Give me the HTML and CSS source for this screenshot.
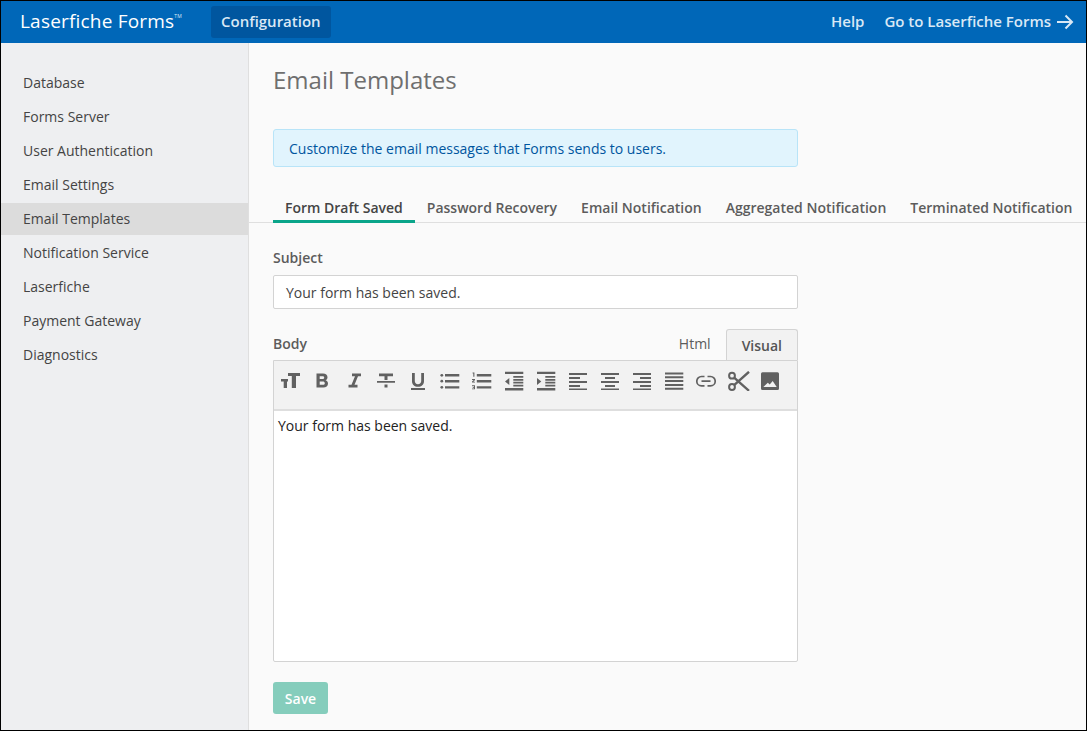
FILE: index.html
```html
<!DOCTYPE html>
<html lang="en">
<head>
<meta charset="utf-8">
<title>Email Templates</title>
<link rel="stylesheet" href="styles.css">
</head>
<body>
<div class="app">
  <header class="topbar">
    <div class="brand">Laserfiche Forms<sup class="tm">TM</sup></div>
    <div class="crumb">Configuration</div>
    <nav class="toplinks">
      <a class="toplink">Help</a>
      <a class="toplink golink">Go to Laserfiche Forms
        <svg class="arrow" width="18" height="16" viewBox="0 0 18 16"><path d="M1 8h15M9.500 1.500 16 8l-6.500 6.500" fill="none" stroke="currentColor" stroke-width="2"/></svg>
      </a>
    </nav>
  </header>
  <div class="main">
    <aside class="sidebar">
      <a class="side-item">Database</a>
      <a class="side-item">Forms Server</a>
      <a class="side-item">User Authentication</a>
      <a class="side-item">Email Settings</a>
      <a class="side-item active">Email Templates</a>
      <a class="side-item">Notification Service</a>
      <a class="side-item">Laserfiche</a>
      <a class="side-item">Payment Gateway</a>
      <a class="side-item">Diagnostics</a>
    </aside>
    <section class="content">
      <h1 class="title">Email Templates</h1>
      <div class="notice">Customize the email messages that Forms sends to users.</div>
      <div class="tabs">
        <a class="tab active">Form Draft Saved</a>
        <a class="tab">Password Recovery</a>
        <a class="tab">Email Notification</a>
        <a class="tab">Aggregated Notification</a>
        <a class="tab">Terminated Notification</a>
      </div>
      <div class="form">
        <label class="label">Subject</label>
        <div class="input">Your form has been saved.</div>
        <div class="body-head">
          <label class="label body-label">Body</label>
          <div class="modes">
            <a class="mode">Html</a>
            <a class="mode on">Visual</a>
          </div>
        </div>
        <div class="editor">
          <div class="toolbar">
            <svg class="ic" viewBox="0 0 20 20"><path d="M8 2h12v3h-4v12h-4.200V5H8zM1 8h7v2.500H7V17H3.700v-6.500H1z"/></svg>
            <svg class="ic" viewBox="0 0 20 20"><path fill-rule="evenodd" d="M4.500 2.500h6.500c2.800 0 4.500 1.500 4.500 3.800 0 1.500-.8 2.500-1.900 3 1.500.5 2.400 1.700 2.400 3.300 0 2.500-1.900 3.900-4.700 3.900H4.500zm3.200 2.700v2.900h2.700c1 0 1.800-.5 1.800-1.500s-.8-1.400-1.800-1.400zm0 5.400v3.200h3.100c1.200 0 2-.5 2-1.600s-.8-1.600-2-1.600z"/></svg>
            <svg class="ic" viewBox="0 0 20 20"><path d="M8 2.500h9v2.800h-3L10.500 13.700h3v2.800h-9v-2.800h3L11 5.300H8z"/></svg>
            <svg class="ic" viewBox="0 0 20 20"><path d="M1 10h18v1.700H1zM3 2.500h14v2.800h-5.500V9h-3V5.300H3zM8.500 13.500h3v3h-3z"/></svg>
            <svg class="ic" viewBox="0 0 20 20"><path d="M3 17h14v2H3zM4 2h2.800v8c0 2 1.300 3.200 3.200 3.200s3.200-1.200 3.200-3.200V2H16v8.200c0 3.400-2.500 5.600-6 5.600s-6-2.200-6-5.600z"/></svg>
            <svg class="ic" viewBox="0 0 20 20"><circle cx="1.800" cy="4.300" r="1.400"/><circle cx="1.800" cy="10.200" r="1.400"/><circle cx="1.800" cy="16.300" r="1.400"/><path d="M5 3h14.300v2.400H5zM5 9h14.300v2.400H5zM5 15.200h14.300v2.400H5z"/></svg>
            <svg class="ic" viewBox="0 0 20 20"><path d="M.6 1.500h1.800v4.300H1.300V2.600H.6zM0 8h3v1.100L1.400 10.700H3v.9H0v-1l1.700-1.700H0zM0 14.300h3v4H0v-.9h2v-.7H.7v-.8H2v-.7H0zM4.800 3h14.500v2.400H4.800zM4.800 9h14.500v2.400H4.800zM4.800 15.200h14.500v2.400H4.800z"/></svg>
            <svg class="ic" viewBox="0 0 20 20"><path d="M1 .8h18.300v2.200H1zM1 17h18.300v2.500H1zM9.300 5h10v1.800h-10zM9.300 7.900h10v1.800h-10zM9.300 10.800h10v1.800h-10zM9.300 13.700h10v1.800h-10zM5.300 7v7L1 10.500z"/></svg>
            <svg class="ic" viewBox="0 0 20 20"><path d="M1 .8h18.300v2.200H1zM1 17h18.300v2.500H1zM9.300 5h10v1.800h-10zM9.300 7.900h10v1.800h-10zM9.300 10.800h10v1.800h-10zM9.300 13.700h10v1.800h-10zM1 7v7l4.300-3.500z"/></svg>
            <svg class="ic" viewBox="0 0 20 20"><path d="M1 2h18v2H1zM1 6h11v2H1zM1 10h18v2H1zM1 14h11v2H1zM1 17.500h18v1.500H1z"/></svg>
            <svg class="ic" viewBox="0 0 20 20"><path d="M1 2h18v2H1zM5 6h10v2H5zM1 10h18v2H1zM5 14h10v2H5zM1 17.500h18v1.500H1z"/></svg>
            <svg class="ic" viewBox="0 0 20 20"><path d="M1 2h18v2H1zM8 6h11v2H8zM1 10h18v2H1zM8 14h11v2H8zM1 17.500h18v1.500H1z"/></svg>
            <svg class="ic" viewBox="0 0 20 20"><path d="M1 1.500h18.300v2H1zM1 5.300h18.300v2H1zM1 9.100h18.300v2H1zM1 12.900h18.300v2H1zM1 16.700h18.300v2H1z"/></svg>
            <svg class="ic" viewBox="0 0 20 20"><path fill="none" stroke="currentColor" stroke-width="1.700" d="M8.500 5.500H5.500a4.700 4.700 0 0 0 0 9.400h3M11.500 5.500h3a4.700 4.700 0 0 1 0 9.400h-3M5.500 10.200h9"/></svg>
            <svg class="ic scissors" viewBox="0 0 22 20"><g fill="none" stroke="currentColor"><circle cx="4" cy="4.700" r="2.900" stroke-width="2"/><circle cx="4" cy="16" r="2.900" stroke-width="2"/><path stroke-width="2.400" d="M6.400 6.800 21 19.800M6.400 13.800 21 .8"/></g></svg>
            <svg class="ic" viewBox="0 0 20 20"><path fill-rule="evenodd" d="M2.500 1.300h15A1.500 1.500 0 0 1 19 2.800v14.700a1.500 1.500 0 0 1-1.500 1.500h-15A1.500 1.500 0 0 1 1 17.500V2.800a1.500 1.500 0 0 1 1.500-1.500zM3.300 16h13.400l-4-6-3 3.600-1.900-1.800z"/></svg>
          </div>
          <div class="editarea">Your form has been saved.</div>
        </div>
        <button class="save" type="button">Save</button>
      </div>
    </section>
  </div>
</div>
</body>
</html>
```
FILE: styles.css
```css
* { box-sizing: border-box; }
html, body { margin: 0; height: 100%; }
body {
  font-family: "Open Sans", "Liberation Sans", sans-serif;
  font-size: 14px;
  color: #444;
  overflow: hidden;
}
.app {
  width: 1087px;
  height: 731px;
  border: 1px solid #000;
  display: flex;
  flex-direction: column;
  background: #fafafa;
}
.topbar {
  height: 42px;
  flex: none;
  background: #0067b8;
  display: flex;
  align-items: center;
  padding: 0 12px 0 19px;
  color: #fff;
}
.brand { font-size: 19px; letter-spacing: .2px; color: #fff; width: 191px; white-space: nowrap; line-height: 40px; height: 42px; }
.tm { font-size: 5px; vertical-align: 10px; line-height: 0; color: #dce9f5; }
.crumb {
  height: 32px;
  line-height: 30px;
  padding: 0 10px;
  background: #00569f;
  border-radius: 3px;
  color: #d9e8f5;
  font-size: 15px;
  font-weight: 600;
}
.toplinks { margin-left: auto; display: flex; gap: 20px; align-items: center; height: 40px; margin-bottom: 2px; }
.toplink { color: #d9e8f5; font-size: 15px; font-weight: 600; white-space: nowrap; }
.golink { display: flex; align-items: center; gap: 5px; }
.arrow { display: block; margin-top: 1px; }
.main { flex: 1; display: flex; min-height: 0; }
.sidebar {
  width: 248px;
  flex: none;
  background: #eeeff1;
  border-right: 1px solid #dfdfdf;
  padding-top: 24px;
  display: flex;
  flex-direction: column;
  gap: 2px;
}
.side-item {
  display: block;
  height: 32px;
  line-height: 31px;
  padding-left: 22px;
  color: #444;
}
.side-item.active { background: #dcdcdc; }
.content { flex: 1; min-width: 0; padding-left: 0; }
.title {
  margin: 0;
  padding: 19px 0 0 24px;
  font-size: 24px;
  font-weight: 400;
  line-height: 36px;
  color: #6f6f6f;
}
.notice {
  margin: 31px 0 0 24px;
  width: 525px;
  height: 38px;
  line-height: 37px;
  padding-left: 15px;
  background: #e1f4fd;
  border: 1px solid #b8e4f8;
  border-radius: 3px;
  color: #00569f;
}
.tabs {
  margin-top: 23px;
  padding-left: 24px;
  display: flex;
  height: 33px;
  border-bottom: 1px solid #dfdfdf;
}
.tab {
  height: 33px;
  line-height: 36px;
  padding: 0 12px;
  font-weight: 600;
  color: #5c5c5c;
  white-space: nowrap;
}
.tab.active { color: #444; border-bottom: 3px solid #0aa58a; }
.form { margin-left: 24px; width: 525px; padding-top: 25px; }
.label { display: block; font-weight: 600; color: #5c5c5c; line-height: 19px; }
.input {
  margin-top: 8px;
  height: 34px;
  line-height: 33px;
  padding-left: 12px;
  background: #fff;
  border: 1px solid #d3d3d3;
  border-radius: 2px;
  color: #444;
}
.body-head { margin-top: 20px; height: 31px; display: flex; justify-content: space-between; }
.body-label { padding-top: 5px; }
.modes { display: flex; align-items: flex-end; }
.mode {
  height: 32px;
  line-height: 32px;
  padding: 0 15px;
  color: #5c5c5c;
}
.mode.on {
  padding: 0 15px;
  font-weight: 600;
  color: #555;
  background: #f2f2f2;
  border: 1px solid #d3d3d3;
  border-bottom: 0;
  border-radius: 3px 3px 0 0;
  line-height: 31px;
  height: 31px;
}
.editor { border: 1px solid #d3d3d3; border-radius: 0 0 2px 2px; background: #fff; }
.toolbar {
  height: 50px;
  background: #f2f2f2;
  border-bottom: 2px solid #dedede;
  display: flex;
  padding: 10px 0 0 6px;
  gap: 12px;
  color: #616161;
}
.ic { width: 20px; height: 20px; fill: currentColor; flex: none; display: block; }
.scissors { width: 22px; margin-right: -2px; }
.editarea { height: 250px; padding: 4px; line-height: 22px; color: #222; }
.save {
  display: block;
  margin-top: 20px;
  width: 55px;
  height: 32px;
  padding: 0;
  border: 0;
  border-radius: 3px;
  background: #85cdbc;
  color: #fff;
  font: 600 14px "Open Sans", "Liberation Sans", sans-serif;
}
```
